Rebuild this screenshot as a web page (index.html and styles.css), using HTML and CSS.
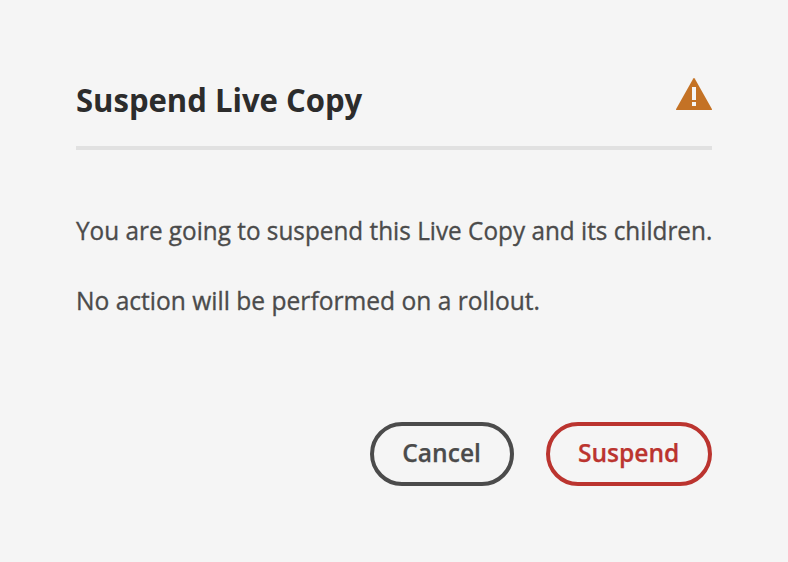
FILE: index.html
```html
<!DOCTYPE html>
<html lang="en">
<head>
<meta charset="utf-8">
<title>Suspend Live Copy</title>
<link rel="stylesheet" href="styles.css">
</head>
<body>
<main class="dialog" role="alertdialog" aria-labelledby="title">
  <header class="dialog-header">
    <h1 id="title">Suspend Live Copy</h1>
    <svg class="alert-icon" viewBox="0 0 36 32" aria-hidden="true">
      <path d="M17.3 .5Q18-.4 18.7 .5L35.9 31Q36.2 32 35.3 32H.7Q-.2 32 .1 31Z" fill="#c47225"/>
      <path d="M16 9h4v13h-4zM16 24h4v4h-4z" fill="#f5f5f5"/>
    </svg>
  </header>
  <section class="dialog-content">
    <p>You are going to suspend this Live Copy and its children.</p>
    <p class="note">No action will be performed on a rollout.</p>
  </section>
  <footer class="dialog-footer">
    <button class="button cancel" type="button"><span>Cancel</span></button>
    <button class="button suspend" type="button"><span>Suspend</span></button>
  </footer>
</main>
</body>
</html>
```
FILE: styles.css
```css
* { box-sizing: border-box; }
body { margin: 0; background: #f5f5f5; font-family: "Open Sans", sans-serif; }
.dialog { height: 562px; padding: 76px; display: flex; flex-direction: column; }
.dialog-header { height: 74px; display: flex; justify-content: space-between; border-bottom: 4px solid #e1e1e1; }
h1 { margin: 0; font-size: 33px; font-weight: 700; line-height: 47px; color: #2c2c2c; white-space: nowrap; transform: scaleX(.94); transform-origin: left; }
.alert-icon { width: 36px; height: 32px; margin-top: 2px; }
.dialog-content { padding-top: 60px; color: #4b4b4b; }
p { width: max-content; margin: 0 0 30px; font-size: 26px; line-height: 40px; white-space: nowrap; -webkit-text-stroke: .35px currentColor; transform: scaleX(.935); transform-origin: left; }
.note { transform: scaleX(.945); }
.dialog-footer { margin-top: auto; display: flex; justify-content: flex-end; gap: 32px; }
.button { display: flex; align-items: center; justify-content: center; height: 64px; padding: 0 0 4px; border: 4px solid; border-radius: 32px; background: transparent; font-family: "Open Sans", sans-serif; font-size: 26px; font-weight: 600; line-height: 1; -webkit-text-stroke: .25px currentColor; }
.button span { transform: scaleX(.945); }
.cancel { width: 144px; color: #4b4b4b; }
.suspend { width: 166px; color: #bb342f; }
```
